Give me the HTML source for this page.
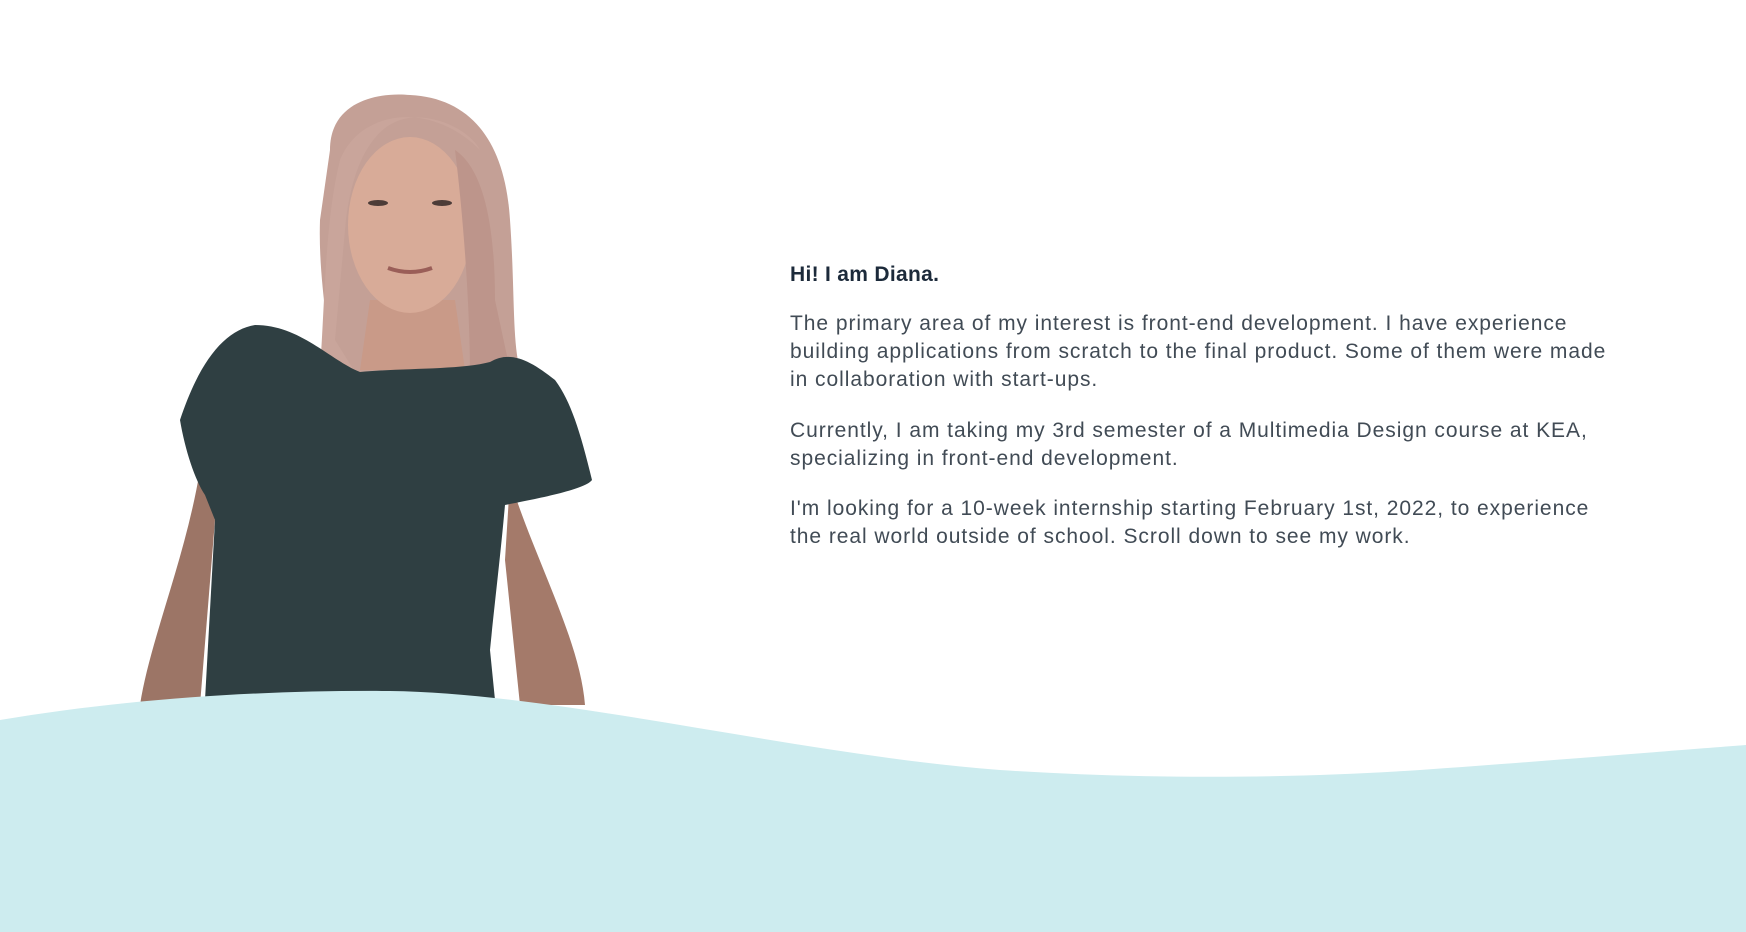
<!DOCTYPE html>
<html><head><meta charset="utf-8"><style>
html,body{margin:0;padding:0;background:#fff;width:1746px;height:932px;overflow:hidden;position:relative;font-family:"Liberation Sans",sans-serif}
.l{position:absolute;left:790px;font-size:21px;line-height:28px;color:#414b55;white-space:nowrap;letter-spacing:0.95px}
.h{color:#1c2a3a;font-weight:bold;font-size:21px;letter-spacing:0.3px}
svg{position:absolute;left:0;top:0}
</style></head><body>
<svg width="1746" height="932" viewBox="0 0 1746 932">
<path d="M200 470 C185 560 150 640 140 705 L200 705 L215 520 Z" fill="#9c7566"/>
<path d="M510 480 C535 560 580 640 585 705 L520 705 L505 560 Z" fill="#a47a6a"/>
<path d="M330 150 C330 100 380 92 410 95 C470 98 505 140 510 220 C515 290 512 340 520 370 L470 372 L330 372 C330 330 318 280 320 220 Z" fill="#c4a096"/>
<path d="M370 300 L455 300 L465 370 L360 370 Z" fill="#c99a88"/>
<ellipse cx="410" cy="225" rx="62" ry="88" fill="#d8ab98"/>
<path d="M340 160 C360 110 430 100 480 150 C470 130 430 110 400 120 C370 130 350 170 345 230 L335 340 L360 380 L320 370 C325 300 325 220 340 160 Z" fill="#c9a59b"/>
<path d="M455 150 C485 170 495 230 495 300 L510 370 L470 372 C470 320 465 230 455 150 Z" fill="#bd958b"/>
<path d="M255 325 C225 330 200 360 180 420 C185 450 195 480 205 495 L215 520 L205 700 L495 700 L490 650 C495 600 500 560 505 505 C530 500 585 490 592 480 C580 430 570 400 555 380 C530 360 510 350 490 362 C460 370 400 368 360 372 C330 360 300 325 255 325 Z" fill="#2f3f42"/>
<ellipse cx="378" cy="203" rx="10" ry="3" fill="#4c3c38"/>
<ellipse cx="442" cy="203" rx="10" ry="3" fill="#4c3c38"/>
<path d="M388 268 Q410 276 432 268" stroke="#9a5e58" stroke-width="4" fill="none"/>
<path d="M0 720 C120 700 250 690 390 691 C560 693 800 755 1000 770 C1150 780 1300 778 1420 770 C1560 760 1680 750 1746 745 L1746 932 L0 932 Z" fill="#cdecef"/>
</svg>
<div class="l h" style="top:261px">Hi! I am Diana.</div>
<div class="l" style="top:310px">The primary area of my interest is front-end development. I have experience</div>
<div class="l" style="top:338px">building applications from scratch to the final product. Some of them were made</div>
<div class="l" style="top:366px">in collaboration with start-ups.</div>
<div class="l" style="top:417px">Currently, I am taking my 3rd semester of a Multimedia Design course at KEA,</div>
<div class="l" style="top:445px">specializing in front-end development.</div>
<div class="l" style="top:495px">I'm looking for a 10-week internship starting February 1st, 2022, to experience</div>
<div class="l" style="top:523px">the real world outside of school. Scroll down to see my work.</div>
</body></html>
